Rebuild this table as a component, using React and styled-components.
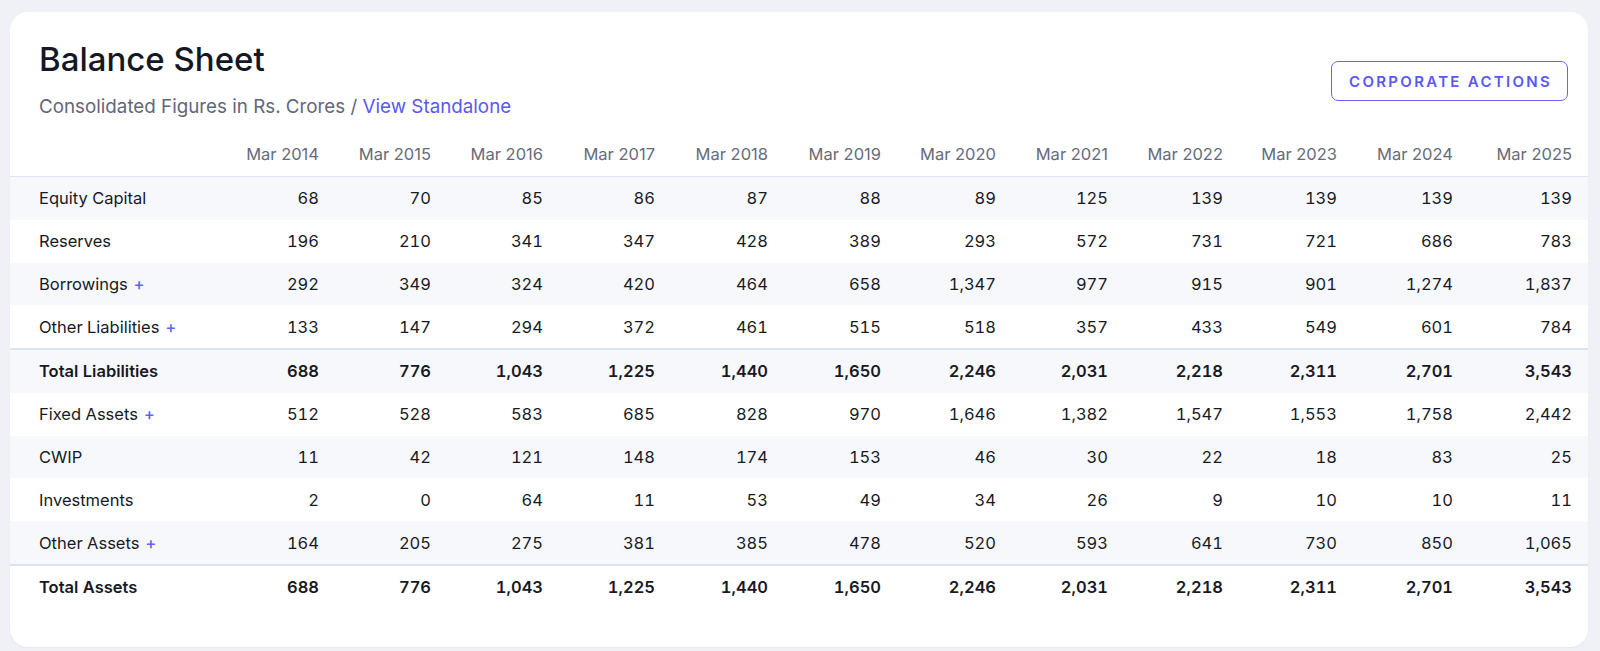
import styled, { createGlobalStyle } from "styled-components"

const GlobalStyle = createGlobalStyle`
    body {
        margin: 0;
        background-color: #f0f1f6;
        font-family: "Inter", "Liberation Sans", sans-serif;
    }
`

const years = ["Mar 2014", "Mar 2015", "Mar 2016", "Mar 2017", "Mar 2018", "Mar 2019", "Mar 2020", "Mar 2021", "Mar 2022", "Mar 2023", "Mar 2024", "Mar 2025"]

// column widths as the auto-sized table laid them out
const colWidths = [112, 112, 112, 112, 113, 113, 115, 112, 115, 114, 116, 119]

const rows = [
    { label: "Equity Capital", values: ["68", "70", "85", "86", "87", "88", "89", "125", "139", "139", "139", "139"] },
    { label: "Reserves", values: ["196", "210", "341", "347", "428", "389", "293", "572", "731", "721", "686", "783"] },
    { label: "Borrowings", expand: true, values: ["292", "349", "324", "420", "464", "658", "1,347", "977", "915", "901", "1,274", "1,837"] },
    { label: "Other Liabilities", expand: true, values: ["133", "147", "294", "372", "461", "515", "518", "357", "433", "549", "601", "784"] },
    { label: "Total Liabilities", total: true, values: ["688", "776", "1,043", "1,225", "1,440", "1,650", "2,246", "2,031", "2,218", "2,311", "2,701", "3,543"] },
    { label: "Fixed Assets", expand: true, values: ["512", "528", "583", "685", "828", "970", "1,646", "1,382", "1,547", "1,553", "1,758", "2,442"] },
    { label: "CWIP", values: ["11", "42", "121", "148", "174", "153", "46", "30", "22", "18", "83", "25"] },
    { label: "Investments", values: ["2", "0", "64", "11", "53", "49", "34", "26", "9", "10", "10", "11"] },
    { label: "Other Assets", expand: true, values: ["164", "205", "275", "381", "385", "478", "520", "593", "641", "730", "850", "1,065"] },
    { label: "Total Assets", total: true, values: ["688", "776", "1,043", "1,225", "1,440", "1,650", "2,246", "2,031", "2,218", "2,311", "2,701", "3,543"] },
]

const App = () => {
    return (<Page>
        <GlobalStyle />
        <Card>
            <Header>
                <div>
                    <Title>Balance Sheet</Title>
                    <Subtitle>Consolidated Figures in Rs. Crores / <a href="#">View Standalone</a></Subtitle>
                </div>
                <ActionButton>Corporate Actions</ActionButton>
            </Header>
            <HeadRow>
                <span></span>
                {years.map((y) => <HeadCell key={y}>{y}</HeadCell>)}
            </HeadRow>
            {rows.map((row, i) => (
                <Row key={row.label} $striped={i % 2 === 0} $total={row.total}>
                    <Label>{row.label}{row.expand && <Plus>+</Plus>}</Label>
                    {row.values.map((v, j) => <Cell key={j}>{v}</Cell>)}
                </Row>
            ))}
        </Card>
    </Page>
    )
}

const Page = styled.div`
    padding: 12px 12px 4px 10px;
`

const Card = styled.div`
    background-color: #ffffff;
    border-radius: 18px;
    padding: 28px 0 38px;
    box-shadow: 0 1px 2px rgba(20, 24, 40, 0.04);
`

const Header = styled.div`
    display: flex;
    justify-content: space-between;
    align-items: center;
    padding: 0 20px 0 29px;
    margin-bottom: 13px;
`

const Title = styled.h1`
    margin: 0;
    font-size: 33px;
    line-height: 1.2;
    font-weight: 500;
    color: #141824;
`

const Subtitle = styled.p`
    margin: 14px 0 0;
    font-size: 18.8px;
    line-height: 1.4;
    color: #62667a;

    a {
        color: #5a57f5;
        text-decoration: none;
    }
`

const ActionButton = styled.button`
    height: 40px;
    margin-top: 3px;
    padding: 0 15px 0 17px;
    background: #ffffff;
    border: 1px solid #6664f2;
    border-radius: 7px;
    color: #5a57f5;
    font-family: "Inter", "Liberation Sans", sans-serif;
    font-size: 15px;
    font-weight: 600;
    letter-spacing: 2.3px;
    text-transform: uppercase;
`

const gridColumns = `1fr ${colWidths.map((w) => `${w}px`).join(" ")}`

const HeadRow = styled.div`
    display: grid;
    grid-template-columns: ${gridColumns};
    height: 43px;
    align-items: center;
    border-bottom: 1px solid #dfe4f1;
`

const HeadCell = styled.span`
    text-align: right;
    padding-right: 16px;
    font-size: 16.5px;
    color: #666b7c;
`

const Row = styled.div`
    display: grid;
    grid-template-columns: ${gridColumns};
    height: 42.8px;
    align-items: center;
    background-color: ${(p) => (p.$striped ? "#f7f8fc" : "#ffffff")};
    border-top: ${(p) => (p.$total ? "2px solid #dbe3f4" : "none")};
    font-weight: ${(p) => (p.$total ? 600 : 400)};
    font-size: 16.5px;
    font-variant-numeric: tabular-nums;
    color: #171a24;
`

const Label = styled.span`
    padding-left: 29px;
    white-space: nowrap;
`

const Plus = styled.span`
    margin-left: 6px;
    color: #6362f2;
    font-weight: 500;
`

const Cell = styled.span`
    text-align: right;
    padding-right: 16px;
`

export default App
